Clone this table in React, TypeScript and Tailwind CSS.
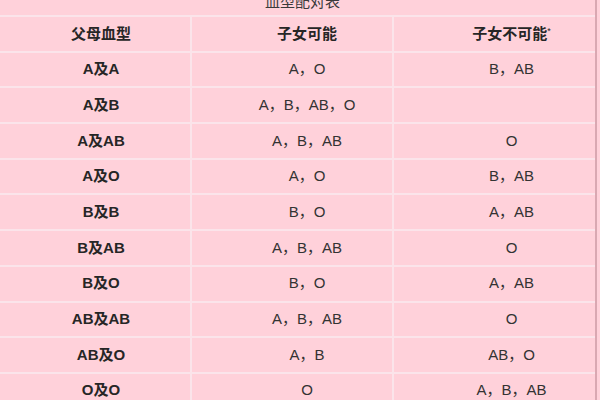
const rows: [string, string, string][] = [
  ["A及A", "A，O", "B，AB"],
  ["A及B", "A，B，AB，O", ""],
  ["A及AB", "A，B，AB", "O"],
  ["A及O", "A，O", "B，AB"],
  ["B及B", "B，O", "A，AB"],
  ["B及AB", "A，B，AB", "O"],
  ["B及O", "B，O", "A，AB"],
  ["AB及AB", "A，B，AB", "O"],
  ["AB及O", "A，B", "AB，O"],
  ["O及O", "O", "A，B，AB"],
];

function Row({ a, b, c, head }: { a: string; b: React.ReactNode; c: React.ReactNode; head?: boolean }) {
  return (
    <div className="grid h-[35.7px] shrink-0 grid-cols-[190px_202px_203px] border-t-2 border-[#fbe4ea]">
      <div className="flex items-center justify-center pl-[12px] text-[15px] font-bold text-[#262626]">{a}</div>
      <div
        className={`flex items-center justify-center border-l-2 border-[#fbe4ea] pl-[30px] text-[15px] ${
          head ? "font-bold text-[#262626]" : "text-[#333]"
        }`}
      >
        {b}
      </div>
      <div
        className={`flex items-center justify-center border-l-2 border-[#fbe4ea] pl-[34px] text-[15px] ${
          head ? "font-bold text-[#262626]" : "text-[#333]"
        }`}
      >
        {c}
      </div>
    </div>
  );
}

export default function App() {
  return (
    <div
      className="flex h-[400px] w-[600px] overflow-hidden bg-[#ffd1da]"
      style={{ fontFamily: '"Liberation Sans", "Noto Sans CJK SC", sans-serif' }}
    >
      <div className="flex w-[597px] shrink-0 flex-col border-r-2 border-[#d9a8b2]">
        <div className="h-[15px] shrink-0 overflow-hidden pl-[10px] text-center">
          <div className="-mt-[6px] text-[15px] leading-none text-[#3a3a3a]">血型配对表</div>
        </div>
        <Row
          head
          a="父母血型"
          b="子女可能"
          c={
            <span>
              子女不可能<sup className="text-[9px] font-normal">*</sup>
            </span>
          }
        />
        {rows.map(([a, b, c]) => (
          <Row key={a} a={a} b={b} c={c} />
        ))}
      </div>
    </div>
  );
}
